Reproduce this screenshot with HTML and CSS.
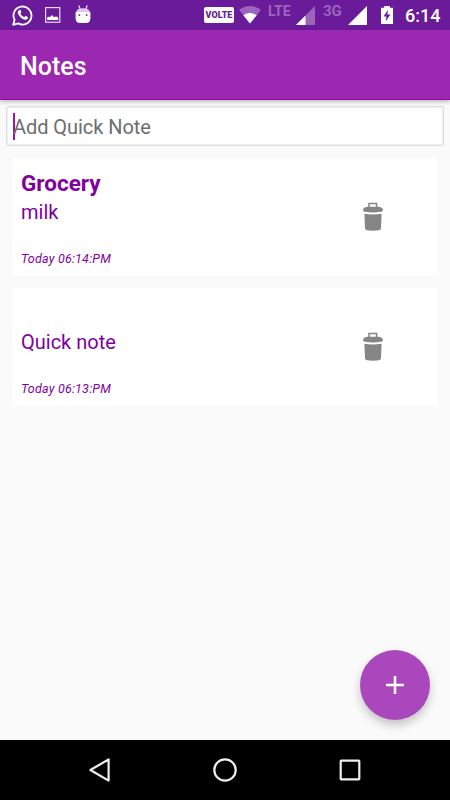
FILE: index.html
```html
<!DOCTYPE html>
<html lang="en">
<head>
    <meta charset="UTF-8">
    <meta name="viewport" content="width=device-width, initial-scale=1.0">
    <title>Notes</title>
    <link rel="stylesheet" href="styles.css">
</head>
<body>
    <!-- Status bar -->
    <div class="status-bar">
        <div class="status-left">
            <svg class="icon-chat" width="22" height="22" viewBox="0 0 22 22">
                <path d="M1.2 20.8 L2.6 15.8 A9 9 0 1 1 6.2 19.4 Z" fill="none" stroke="#fff" stroke-width="1.8" stroke-linejoin="round"/>
                <path d="M7.2 5.9 C7.7 5.6 8.4 5.7 8.6 6.2 L9.3 7.9 C9.5 8.4 8.7 9.1 8.4 9.5 C9.2 11.1 10.5 12.4 12.3 13.1 C12.8 12.7 13.3 11.9 13.8 12.1 L15.7 13 C16.3 13.3 15.9 14.6 15.3 15.1 C13.9 16.2 12 15.7 10.3 14.7 C8.5 13.7 6.9 11.9 6.1 10.1 C5.4 8.5 6 6.7 7.2 5.9 Z" fill="#fff"/>
            </svg>
            <svg class="icon-picture" width="16" height="16" viewBox="0 0 16 16">
                <rect x="0.6" y="0.6" width="14.2" height="14.6" fill="none" stroke="#e9dcf2" stroke-width="1.2"/>
                <path d="M2.2 13 V10.3 Q3.8 9.2 5 10 L7 8 L9 10.2 Q11 8.6 13.2 10.4 V13 Z" fill="#fff"/>
            </svg>
            <svg class="icon-robot" width="16" height="19" viewBox="0 0 16 19">
                <path d="M3.7 0.5 L5.2 4 M12.3 0.5 L10.8 4" stroke="#fff" stroke-width="1.1"/>
                <path d="M1 7.5 Q1.4 3.2 8 3.2 Q14.6 3.2 15 7.5 Z" fill="#dcc8eb"/>
                <path d="M0.6 7 H15.4 V13.5 Q15 18 11 18 H5 Q1 18 0.6 13.5 Z" fill="#fff"/>
                <rect x="3.6" y="9.3" width="1.6" height="1.6" fill="#6a1b9a"/>
                <rect x="10.8" y="9.3" width="1.6" height="1.6" fill="#6a1b9a"/>
            </svg>
        </div>
        <div class="status-right">
            <span class="volte">VOLTE</span>
            <svg class="icon-wifi" width="22" height="18" viewBox="0 0 22 18">
                <path d="M0 3.8 Q11 -3.8 22 3.8 L11 17.6 Z" fill="#9c65bc"/>
                <path d="M4.3 9.2 Q11 4.6 17.7 9.2 L11 17.6 Z" fill="#fff"/>
            </svg>
            <span class="network lte">LTE</span>
            <svg class="icon-signal" width="19" height="19" viewBox="0 0 19 19">
                <path d="M0 19 L19 0 V19 Z" fill="#9c65bc"/>
                <path d="M0 19 L9.5 9.5 V19 Z" fill="#fff"/>
            </svg>
            <span class="network net-3g">3G</span>
            <svg class="icon-signal full" width="19" height="19" viewBox="0 0 19 19">
                <path d="M0 19 L19 0 V19 Z" fill="#fff"/>
            </svg>
            <svg class="icon-battery" width="12" height="18" viewBox="0 0 12 18">
                <path d="M3.2 0 H8.8 V1.7 H12 V18 H0 V1.7 H3.2 Z" fill="#fff"/>
                <path d="M7 4 L2.5 10.4 H5.4 L4.7 15.2 L9.5 8.6 H6.4 Z" fill="#6a1b9a"/>
            </svg>
            <span class="clock">6:14</span>
        </div>
    </div>

    <!-- Header -->
    <header>
        <h1>Notes</h1>
    </header>

    <!-- Notes -->
    <main>
        <div class="quick-note">
            <span class="cursor"></span>
            <span class="placeholder">Add Quick Note</span>
        </div>

        <div class="note-card">
            <div class="note-text">
                <h2>Grocery</h2>
                <p>milk</p>
                <time>Today 06:14:PM</time>
            </div>
            <svg class="icon-trash" width="20" height="30" viewBox="0 0 20 30">
                <path d="M6 5.5 V1.5 H13.6 V5.5" fill="none" stroke="#858585" stroke-width="1.5"/>
                <path d="M0 8.2 Q0.2 5 5 4.8 H15 Q19.8 5 20 8.2 Q20 9.5 18 9.7 Q10 11.2 2 9.7 Q0 9.5 0 8.2 Z" fill="#858585"/>
                <path d="M1.4 11.8 Q10 13.2 18.6 11.8 L18 26.6 Q17.8 28.8 10 28.8 Q2.2 28.8 2 26.6 Z" fill="#858585"/>
            </svg>
        </div>

        <div class="note-card">
            <div class="note-text">
                <h2></h2>
                <p>Quick note</p>
                <time>Today 06:13:PM</time>
            </div>
            <svg class="icon-trash" width="20" height="30" viewBox="0 0 20 30">
                <path d="M6 5.5 V1.5 H13.6 V5.5" fill="none" stroke="#858585" stroke-width="1.5"/>
                <path d="M0 8.2 Q0.2 5 5 4.8 H15 Q19.8 5 20 8.2 Q20 9.5 18 9.7 Q10 11.2 2 9.7 Q0 9.5 0 8.2 Z" fill="#858585"/>
                <path d="M1.4 11.8 Q10 13.2 18.6 11.8 L18 26.6 Q17.8 28.8 10 28.8 Q2.2 28.8 2 26.6 Z" fill="#858585"/>
            </svg>
        </div>

        <button class="add-button" aria-label="Add note">
            <svg width="18" height="18" viewBox="0 0 18 18">
                <path d="M9 0 V18 M0 9 H18" stroke="#fff" stroke-width="2.6"/>
            </svg>
        </button>
    </main>

    <!-- Navigation -->
    <nav>
        <svg width="24" height="24" viewBox="0 0 24 24">
            <path d="M20.6 1.4 V22.6 L2.4 12 Z" fill="none" stroke="#eee" stroke-width="2.2" stroke-linejoin="round"/>
        </svg>
        <svg width="24" height="24" viewBox="0 0 24 24">
            <circle cx="12" cy="12" r="10.7" fill="none" stroke="#eee" stroke-width="2.2"/>
        </svg>
        <svg width="24" height="24" viewBox="0 0 24 24">
            <rect x="2.7" y="2.7" width="18.6" height="18.6" rx="0.5" fill="none" stroke="#eee" stroke-width="2.2"/>
        </svg>
    </nav>
</body>
</html>
```
FILE: styles.css
```css
/* General Styles */
* {
    box-sizing: border-box;
}

body {
    font-family: Roboto, sans-serif;
    margin: 0;
    height: 800px;
    display: flex;
    flex-direction: column;
    background-color: #fafafa;
    overflow: hidden;
}

svg {
    display: block;
    flex: none;
}

/* Status Bar */
.status-bar {
    height: 30px;
    padding: 0 10px 0 12px;
    display: flex;
    justify-content: space-between;
    background-color: #6a1b9a;
    color: white;
}

.status-left,
.status-right {
    display: flex;
    align-items: flex-start;
}

.icon-chat {
    margin-top: 4px;
}

.icon-picture {
    margin: 7px 0 0 11px;
}

.icon-robot {
    margin: 5px 0 0 14px;
}

.volte {
    width: 30px;
    height: 16px;
    margin: 7px 5px 0 0;
    border-radius: 2px;
    background-color: white;
    color: #6a1b9a;
    font-size: 9px;
    font-weight: 900;
    line-height: 16px;
    text-align: center;
}

.icon-wifi {
    margin-top: 6px;
}

.network {
    color: #9c65bc;
    font-size: 14px;
    font-weight: 700;
    line-height: 16px;
}

.lte {
    width: 28px;
    margin: 3px 0 0 7px;
}

.net-3g {
    width: 25px;
    margin: 3px 0 0 8px;
    font-size: 15px;
}

.icon-signal {
    margin-top: 6px;
}

.icon-battery {
    margin: 6px 0 0 14px;
}

.clock {
    width: 35px;
    margin: 5px 0 0 12px;
    font-size: 18px;
    font-weight: 500;
    line-height: 21px;
}

/* Header */
header {
    position: relative;
    height: 70px;
    padding: 0 20px;
    display: flex;
    align-items: center;
    background-color: #9c27b0;
    border-bottom: 1px solid #8e0ba3;
    box-shadow: 0 2px 4px rgba(0, 0, 0, 0.25);
}

header h1 {
    margin: 3px 0 0;
    color: white;
    font-size: 25px;
    font-weight: 500;
}

/* Quick Note Input */
main {
    position: relative;
    flex: 1;
    padding: 6px 6px 0;
}

.quick-note {
    height: 40px;
    padding-left: 6px;
    display: flex;
    align-items: center;
    background-color: white;
    border: 1px solid #dedede;
    border-radius: 2px;
    box-shadow: inset 0 0 0 1px #f0f0f0;
}

.cursor {
    width: 2px;
    height: 27px;
    margin-right: -2px;
    background-color: #9c10b0;
}

.placeholder {
    padding-top: 2px;
    color: #6e6e6e;
    font-size: 20px;
    line-height: 24px;
    letter-spacing: -0.05px;
}

/* Note Cards */
.note-card {
    height: 118px;
    margin: 12px 6px 0;
    padding: 0 55px 0 9px;
    display: flex;
    align-items: center;
    justify-content: space-between;
    background-color: white;
    color: #8000a0;
}

.note-text h2 {
    height: 29px;
    margin: 0;
    font-size: 22.5px;
    line-height: 28px;
}

.note-text p {
    margin: 0 0 25px;
    font-size: 20px;
    line-height: 28px;
}

.note-text time {
    display: block;
    margin-bottom: -1px;
    font-size: 12.5px;
    font-style: italic;
    line-height: 16px;
    letter-spacing: 0.2px;
}

/* Add Button */
.add-button {
    position: absolute;
    right: 20px;
    bottom: 20px;
    width: 70px;
    height: 70px;
    padding: 0;
    display: flex;
    align-items: center;
    justify-content: center;
    border: none;
    border-radius: 50%;
    background-color: #ab47bc;
    box-shadow: 0 5px 10px rgba(0, 0, 0, 0.22);
}

/* Navigation */
nav {
    height: 60px;
    padding: 0 88px;
    display: flex;
    align-items: center;
    justify-content: space-between;
    background-color: black;
}
```
